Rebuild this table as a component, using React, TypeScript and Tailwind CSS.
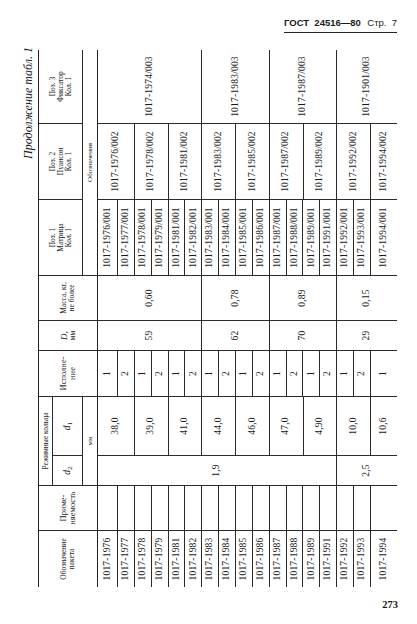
const SERIF = "[font-family:'Liberation_Serif','Times_New_Roman',serif]";

// row heights of the 17 body rows (table frame, before rotation)
const ROW_H = [20, ...Array(15).fill(16.87), 26];

type Seg = { t: string; n: number };

const NUMS = [
  "1976", "1977", "1978", "1979", "1981", "1982", "1983", "1984", "1985",
  "1986", "1987", "1988", "1989", "1991", "1992", "1993", "1994",
];

const one = (list: string[]): Seg[] => list.map((t) => ({ t, n: 1 }));

const COL_PACK = one(NUMS.map((n) => `1017-${n}`));
const COL_USE = one(NUMS.map(() => ""));
const COL_D2: Seg[] = [
  { t: "1,9", n: 14 },
  { t: "2,5", n: 3 },
];
const COL_D1: Seg[] = [
  { t: "38,0", n: 2 },
  { t: "39,0", n: 2 },
  { t: "41,0", n: 2 },
  { t: "44,0", n: 2 },
  { t: "46,0", n: 2 },
  { t: "47,0", n: 2 },
  { t: "4,90", n: 2 },
  { t: "10,0", n: 2 },
  { t: "10,6", n: 1 },
];
const COL_EXEC = one(NUMS.map((_, i) => (i % 2 === 0 ? "1" : "2")));
const COL_D: Seg[] = [
  { t: "59", n: 6 },
  { t: "62", n: 4 },
  { t: "70", n: 4 },
  { t: "29", n: 3 },
];
const COL_MASS: Seg[] = [
  { t: "0,60", n: 6 },
  { t: "0,78", n: 4 },
  { t: "0,89", n: 4 },
  { t: "0,15", n: 3 },
];
const COL_P1 = one(NUMS.map((n) => `1017-${n}/001`));
const COL_P2: Seg[] = [
  { t: "1017-1976/002", n: 2 },
  { t: "1017-1978/002", n: 2 },
  { t: "1017-1981/002", n: 2 },
  { t: "1017-1983/002", n: 2 },
  { t: "1017-1985/002", n: 2 },
  { t: "1017-1987/002", n: 2 },
  { t: "1017-1989/002", n: 2 },
  { t: "1017-1992/002", n: 2 },
  { t: "1017-1994/002", n: 1 },
];
const COL_P3: Seg[] = [
  { t: "1017-1974/003", n: 6 },
  { t: "1017-1983/003", n: 4 },
  { t: "1017-1987/003", n: 4 },
  { t: "1017-1901/003", n: 3 },
];

function Body({ segs }: { segs: Seg[] }) {
  let i = 0;
  return (
    <div className="flex flex-col">
      {segs.map((s, k) => {
        const h = ROW_H.slice(i, i + s.n).reduce((a, b) => a + b, 0);
        i += s.n;
        const last = k === segs.length - 1;
        return (
          <div
            key={k}
            style={{ height: h }}
            className={
              last
                ? "flex items-center justify-center text-[9.5px] leading-none tracking-[0.2px]"
                : "flex items-center justify-center text-[9.5px] leading-none tracking-[0.2px] border-b border-[#2a2a2a]"
            }
          >
            {s.t}
          </div>
        );
      })}
    </div>
  );
}

function Head({ children }: { children: React.ReactNode }) {
  return (
    <div className="h-[59px] flex flex-col items-center justify-center text-center text-[7.5px] leading-[8px] border-b-[1.5px] border-[#222]">
      {children}
    </div>
  );
}

function Column({ w, head, segs }: { w: string; head: React.ReactNode; segs: Seg[] }) {
  return (
    <div className={`${w} flex flex-col border-r border-[#2a2a2a]`}>
      <Head>{head}</Head>
      <Body segs={segs} />
    </div>
  );
}

function PosHead({ n, name }: { n: string; name: string }) {
  return (
    <>
      <span>Поз. {n}</span>
      <span>{name}</span>
      <span>Кол. 1</span>
    </>
  );
}

export default function App() {
  return (
    <div className={`w-[417px] h-[624px] bg-white text-[#1a1a1a] ${SERIF}`}>
      {/* running head */}
      <div className="h-[50px] pt-[18px]">
        <div className="ml-[284px] w-[113px] flex items-end justify-between pb-[4px] border-b-[1.5px] border-[#222] [font-family:'Liberation_Sans',Arial,sans-serif] text-[9.5px] leading-[10px]">
          <span className="font-bold">ГОСТ&nbsp;&nbsp;24516—80</span>
          <span>Стр.&nbsp;&nbsp;7</span>
        </div>
      </div>

      {/* rotated table */}
      <div className="ml-[17px] w-[381px] h-[537px]">
        <div className="w-[537px] origin-top-left -rotate-90 translate-y-[537px] flex flex-col">
          <div className="h-[21px] -mr-[3px] flex items-center justify-end italic text-[12px] leading-none">
            Продолжение табл. 1
          </div>

          <div className="flex border-t-[1.5px] border-[#222]">
            <Column
              w="w-[57px]"
              head={
                <>
                  <span>Обозначение</span>
                  <span>пакета</span>
                </>
              }
              segs={COL_PACK}
            />
            <Column
              w="w-[45px]"
              head={
                <>
                  <span className="text-[8.5px] leading-[9px]">Приме-</span>
                  <span className="text-[8.5px] leading-[9px]">няемость</span>
                </>
              }
              segs={COL_USE}
            />

            {/* Режимные кольца */}
            <div className="w-[89px] flex flex-col border-r border-[#2a2a2a]">
              <div className="h-[14px] flex items-center justify-center text-[7.5px] leading-none border-b border-[#2a2a2a]">
                Режимные кольца
              </div>
              <div className="h-[30px] flex border-b border-[#2a2a2a] text-[9.5px] leading-none">
                <div className="w-[30px] flex items-center justify-center border-r border-[#2a2a2a]">
                  <span>
                    <i>d</i>
                    <sub>2</sub>
                  </span>
                </div>
                <div className="flex-1 flex items-center justify-center">
                  <span>
                    <i>d</i>
                    <sub>1</sub>
                  </span>
                </div>
              </div>
              <div className="h-[15px] flex items-center justify-center text-[7px] leading-none border-b-[1.5px] border-[#222]">
                мм
              </div>
              <div className="flex">
                <div className="w-[30px] border-r border-[#2a2a2a]">
                  <Body segs={COL_D2} />
                </div>
                <div className="flex-1">
                  <Body segs={COL_D1} />
                </div>
              </div>
            </div>

            <Column
              w="w-[46px]"
              head={
                <>
                  <span className="text-[8.5px] leading-[9px]">Исполне-</span>
                  <span className="text-[8.5px] leading-[9px]">ние</span>
                </>
              }
              segs={COL_EXEC}
            />
            <Column
              w="w-[30px]"
              head={
                <>
                  <span className="text-[9px] leading-[10px]">
                    <i>D</i>,
                  </span>
                  <span className="leading-[8px]">мм</span>
                </>
              }
              segs={COL_D}
            />
            <Column
              w="w-[45px]"
              head={
                <>
                  <span>Масса, кг,</span>
                  <span>не более</span>
                </>
              }
              segs={COL_MASS}
            />

            {/* Обозначения */}
            <div className="w-[225px] flex flex-col">
              <div className="h-[44px] flex border-b border-[#2a2a2a] text-[7.5px] leading-[8px] text-center">
                <div className="w-[76px] flex flex-col items-center justify-center border-r border-[#2a2a2a]">
                  <PosHead n="1" name="Матрица" />
                </div>
                <div className="w-[76px] flex flex-col items-center justify-center border-r border-[#2a2a2a]">
                  <PosHead n="2" name="Пуансон" />
                </div>
                <div className="flex-1 flex flex-col items-center justify-center">
                  <PosHead n="3" name="Фиксатор" />
                </div>
              </div>
              <div className="h-[15px] flex items-center justify-center text-[7px] leading-none border-b-[1.5px] border-[#222]">
                Обозначения
              </div>
              <div className="flex">
                <div className="w-[76px] border-r border-[#2a2a2a]">
                  <Body segs={COL_P1} />
                </div>
                <div className="w-[76px] border-r border-[#2a2a2a]">
                  <Body segs={COL_P2} />
                </div>
                <div className="flex-1">
                  <Body segs={COL_P3} />
                </div>
              </div>
            </div>
          </div>
        </div>
      </div>

      {/* folio */}
      <div className="mt-[13px] pr-[19px] text-right font-bold text-[10.5px] leading-none">273</div>
    </div>
  );
}
